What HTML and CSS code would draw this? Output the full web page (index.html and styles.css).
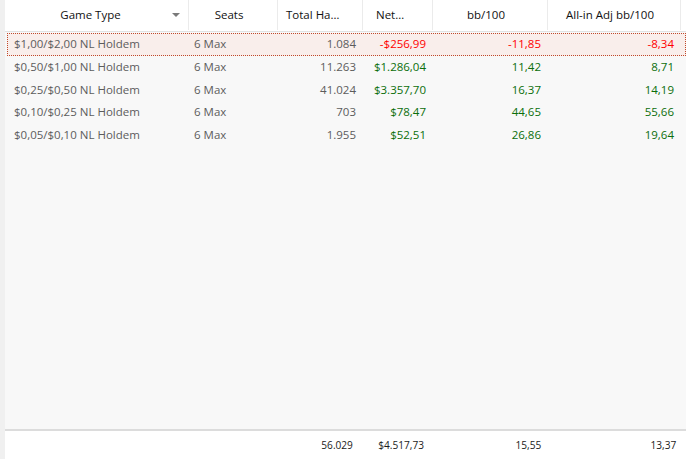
FILE: index.html
```html
<!DOCTYPE html>
<html lang="en">
<head>
<meta charset="utf-8">
<title>Game Type stats</title>
<link rel="stylesheet" href="styles.css">
</head>
<body>
<div class="frame">
  <div class="grid head">
    <div class="hc h1">Game Type<span class="arrow"></span></div>
    <div class="hc">Seats</div>
    <div class="hc h3">Total Hands</div>
    <div class="hc h4">Net Won</div>
    <div class="hc">bb/100</div>
    <div class="hc">All-in Adj bb/100</div>
    <div class="hc last"></div>
  </div>
  <div class="body">
    <div class="grid row selected">
      <div class="c name">$1,00/$2,00 NL Holdem</div>
      <div class="c seats">6 Max</div>
      <div class="c num">1.084</div>
      <div class="c num neg">-$256,99</div>
      <div class="c num neg">-11,85</div>
      <div class="c num neg">-8,34</div>
      <div class="c"></div>
    </div>
    <div class="grid row">
      <div class="c name">$0,50/$1,00 NL Holdem</div>
      <div class="c seats">6 Max</div>
      <div class="c num">11.263</div>
      <div class="c num pos">$1.286,04</div>
      <div class="c num pos">11,42</div>
      <div class="c num pos">8,71</div>
      <div class="c"></div>
    </div>
    <div class="grid row">
      <div class="c name">$0,25/$0,50 NL Holdem</div>
      <div class="c seats">6 Max</div>
      <div class="c num">41.024</div>
      <div class="c num pos">$3.357,70</div>
      <div class="c num pos">16,37</div>
      <div class="c num pos">14,19</div>
      <div class="c"></div>
    </div>
    <div class="grid row">
      <div class="c name">$0,10/$0,25 NL Holdem</div>
      <div class="c seats">6 Max</div>
      <div class="c num">703</div>
      <div class="c num pos">$78,47</div>
      <div class="c num pos">44,65</div>
      <div class="c num pos">55,66</div>
      <div class="c"></div>
    </div>
    <div class="grid row">
      <div class="c name">$0,05/$0,10 NL Holdem</div>
      <div class="c seats">6 Max</div>
      <div class="c num">1.955</div>
      <div class="c num pos">$52,51</div>
      <div class="c num pos">26,86</div>
      <div class="c num pos">19,64</div>
      <div class="c"></div>
    </div>
  </div>
  <div class="grid foot">
    <div class="fc"></div>
    <div class="fc"></div>
    <div class="fc f3"><span>56.029</span></div>
    <div class="fc f4"><span>$4.517,73</span></div>
    <div class="fc f5"><span>15,55</span></div>
    <div class="fc f6"><span>13,37</span></div>
    <div class="fc"></div>
  </div>
</div>
</body>
</html>
```
FILE: styles.css
```css
html, body {
  margin: 0;
  padding: 0;
  background: #ffffff;
}
body {
  font-family: "Open Sans", "Noto Sans", sans-serif;
  font-size: 11.5px;
}
.frame {
  width: 686px;
  height: 459px;
  display: flex;
  flex-direction: column;
  border-left: 5px solid #f0f0f0;
  box-sizing: border-box;
  overflow: hidden;
}
.grid {
  display: grid;
  grid-template-columns: 184px 89px 85px 70px 115px 133px 1fr;
}
.head {
  height: 32px;
  background: #ffffff;
  border-bottom: 1px solid #e2e2e2;
  box-sizing: border-box;
  align-items: start;
}
.hc {
  position: relative;
  height: 30px;
  line-height: 30px;
  color: #111111;
  text-align: center;
  padding: 0 16px 0 8px;
  border-right: 1px solid #ebebeb;
  white-space: nowrap;
  overflow: hidden;
  text-overflow: ellipsis;
  box-sizing: border-box;
}
.hc.h1 {
  padding: 0 20px 0 8px;
}
.hc.h3 {
  text-align: left;
  padding: 0 18px 0 8px;
}
.hc.h4 {
  text-align: left;
  padding: 0 27px 0 13px;
}
.hc.last {
  border-right: none;
}
.arrow {
  position: absolute;
  right: 8px;
  top: 13px;
  width: 0;
  height: 0;
  border-left: 4px solid transparent;
  border-right: 4px solid transparent;
  border-top: 4px solid #7a7a7a;
}
.body {
  flex: 1;
  background: #f8f8f8;
  padding-top: 1px;
}
.row {
  height: 22.75px;
  line-height: 22px;
  color: #5c5c5c;
}
.row.selected {
  background: #f9eeeb;
  outline: 1px dotted #c0492b;
  outline-offset: -1px;
  margin-left: 2px;
  grid-template-columns: 182px 89px 85px 70px 115px 133px 1fr;
}
.c {
  white-space: nowrap;
  overflow: hidden;
}
.name {
  padding-left: 9px;
}
.row.selected .name {
  padding-left: 7px;
}
.seats {
  padding-left: 5px;
}
.num {
  text-align: right;
  padding-right: 7px;
}
.neg {
  color: #ff0000;
}
.pos {
  color: #0b6e0b;
}
.foot {
  height: 30px;
  border-top: 2px solid #dcdcdc;
  background: #ffffff;
  box-sizing: border-box;
  line-height: 28px;
  color: #1a1a1a;
}
.fc {
  text-align: right;
  white-space: nowrap;
}
.fc span {
  display: inline-block;
  transform: scaleX(0.88);
  transform-origin: right center;
}
.f3 { padding-right: 10px; }
.f4 { padding-right: 9px; }
.f5 { padding-right: 7px; }
.f6 { padding-right: 5px; }
```
